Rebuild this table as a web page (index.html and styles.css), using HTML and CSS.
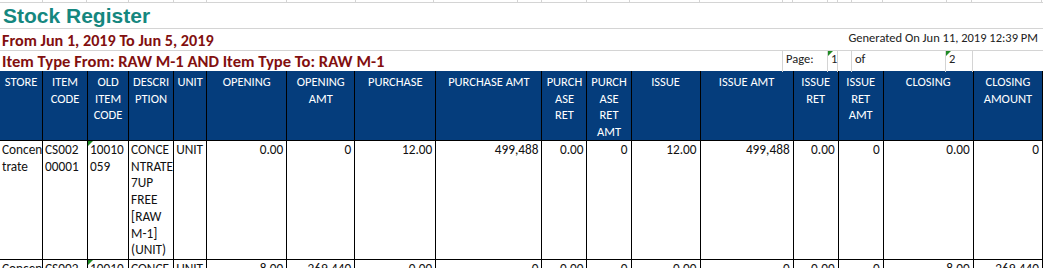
FILE: index.html
```html
<!DOCTYPE html>
<html>
<head>
<meta charset="utf-8">
<title>Stock Register</title>
<link rel="stylesheet" href="styles.css">
</head>
<body>
<div class="sheet">
  <div class="strip">
    <span></span><span></span><span></span><span></span><span></span><span></span><span></span><span></span><span></span><span></span><span></span><span></span><span></span><span></span><span></span><span></span><span></span><span></span><span></span><span></span><span></span><span></span>
  </div>
  <div class="row-title"><span class="title">Stock Register</span></div>
  <div class="row-date">
    <span class="red">From Jun 1, 2019 To Jun 5, 2019</span>
    <span class="generated">Generated On Jun 11, 2019 12:39 PM</span>
  </div>
  <div class="row-type">
    <div class="cell-type"><span class="red">Item Type From: RAW M-1 AND Item Type To: RAW M-1</span></div>
    <div class="pcell">Page:</div>
    <div class="pcell flag">1</div>
    <div class="pcell"></div>
    <div class="pcell">of</div>
    <div class="pcell flag">2</div>
    <div class="pcell last"></div>
  </div>
  <table class="report">
    <colgroup>
      <col class="w43"><col class="w45"><col class="w41"><col class="w45"><col class="w33">
      <col class="w80"><col class="w68"><col class="w81"><col class="w106"><col class="w45">
      <col class="w44"><col class="w69"><col class="w93"><col class="w45"><col class="w45">
      <col class="w90"><col class="w69">
    </colgroup>
    <thead>
      <tr>
        <th>STORE</th>
        <th>ITEM CODE</th>
        <th>OLD ITEM CODE</th>
        <th>DESCRI PTION</th>
        <th>UNIT</th>
        <th>OPENING</th>
        <th>OPENING AMT</th>
        <th>PURCHASE</th>
        <th>PURCHASE AMT</th>
        <th>PURCH ASE RET</th>
        <th>PURCH ASE RET AMT</th>
        <th>ISSUE</th>
        <th>ISSUE AMT</th>
        <th>ISSUE RET</th>
        <th>ISSUE RET AMT</th>
        <th>CLOSING</th>
        <th>CLOSING AMOUNT</th>
      </tr>
    </thead>
    <tbody>
      <tr class="tall">
        <td>Concen trate</td>
        <td>CS002 00001</td>
        <td class="flag">10010 059</td>
        <td>CONCE NTRATE 7UP FREE [RAW M-1] (UNIT)</td>
        <td>UNIT</td>
        <td class="num">0.00</td>
        <td class="num">0</td>
        <td class="num">12.00</td>
        <td class="num">499,488</td>
        <td class="num">0.00</td>
        <td class="num">0</td>
        <td class="num">12.00</td>
        <td class="num">499,488</td>
        <td class="num">0.00</td>
        <td class="num">0</td>
        <td class="num">0.00</td>
        <td class="num">0</td>
      </tr>
      <tr>
        <td>Concen trate</td>
        <td>CS002 00002</td>
        <td class="flag">10010 060</td>
        <td>CONCE NTRATE</td>
        <td>UNIT</td>
        <td class="num">8.00</td>
        <td class="num">269,440</td>
        <td class="num">0.00</td>
        <td class="num">0</td>
        <td class="num">0.00</td>
        <td class="num">0</td>
        <td class="num">0.00</td>
        <td class="num">0</td>
        <td class="num">0.00</td>
        <td class="num">0</td>
        <td class="num">8.00</td>
        <td class="num">269,440</td>
      </tr>
    </tbody>
  </table>
</div>
</body>
</html>
```

FILE: styles.css
```css
html, body {
  margin: 0;
  padding: 0;
  background: #ffffff;
}

.sheet {
  width: 1043px;
  font-family: Carlito, Calibri, Lato, "Liberation Sans", sans-serif;
  color: #000;
  overflow: hidden;
}

.strip {
  display: grid;
  grid-template-columns: 43px 44px 42px 45px 33px 80px 69px 78px 84px 24px 45px 43px 70px 83px 10px 35px 10px 14px 31px 64px 25px 70px;
  height: 3px;
  border-bottom: 1px solid #d4d4d4;
  box-sizing: border-box;
}

.strip span {
  border-right: 1px solid #d4d4d4;
}

.row-title {
  height: 26px;
  box-sizing: border-box;
  border-bottom: 1px solid #d4d4d4;
  display: flex;
  align-items: flex-end;
  padding-left: 3px;
}

.title {
  font-family: "Liberation Sans", Arial, sans-serif;
  font-weight: bold;
  font-size: 21px;
  line-height: 24px;
  color: #15877f;
}

.red {
  font-weight: bold;
  color: #820f0f;
  font-size: 16.2px;
  white-space: nowrap;
}

.row-date {
  height: 22px;
  box-sizing: border-box;
  border-bottom: 1px solid #d4d4d4;
  display: flex;
  justify-content: space-between;
  align-items: flex-start;
  padding: 0 5px 0 2px;
}

.row-date .red {
  line-height: 21px;
  padding-top: 1px;
}

.generated {
  font-size: 12.5px;
  line-height: 16px;
  padding-top: 1px;
  color: #222;
  white-space: nowrap;
}

.row-type {
  display: grid;
  grid-template-columns: 783px 45px 10px 14px 94px 27px 70px;
  height: 20px;
}

.cell-type {
  padding-left: 2px;
  line-height: 21px;
  border-right: 1px solid #d4d4d4;
  box-sizing: border-box;
}

.cell-type .red {
  font-size: 16.6px;
}

.pcell {
  position: relative;
  font-size: 12.5px;
  line-height: 16px;
  padding-left: 3px;
  border-right: 1px solid #d4d4d4;
  box-sizing: border-box;
  color: #222;
  white-space: nowrap;
}

.pcell.last {
  border-right: none;
}

.flag {
  position: relative;
}

.flag::before {
  content: "";
  position: absolute;
  left: 0;
  top: 0;
  border-top: 5px solid #1f8a24;
  border-right: 5px solid transparent;
}

.report {
  border-collapse: separate;
  border-spacing: 0;
  table-layout: fixed;
  width: 1043px;
}

.w43 { width: 43px; }
.w45 { width: 45px; }
.w41 { width: 41px; }
.w33 { width: 33px; }
.w80 { width: 80px; }
.w68 { width: 68px; }
.w81 { width: 81px; }
.w106 { width: 106px; }
.w44 { width: 44px; }
.w69 { width: 69px; }
.w93 { width: 93px; }
.w90 { width: 90px; }

.report th,
.report td {
  box-sizing: border-box;
  border-right: 1px solid #000;
  border-bottom: 1px solid #000;
  vertical-align: top;
  overflow: hidden;
}

.report th {
  background: #053d7c;
  color: #fff;
  font-weight: normal;
  font-size: 12.5px;
  line-height: 16.5px;
  height: 68px;
  padding: 3px 2px 0;
  text-align: center;
}

.report td {
  font-size: 13.3px;
  line-height: 16.7px;
  padding: 1px 3px 0 2px;
  text-align: left;
  color: #111;
}

.report tr.tall td {
  height: 117px;
}

.report td.num {
  text-align: right;
}
```
